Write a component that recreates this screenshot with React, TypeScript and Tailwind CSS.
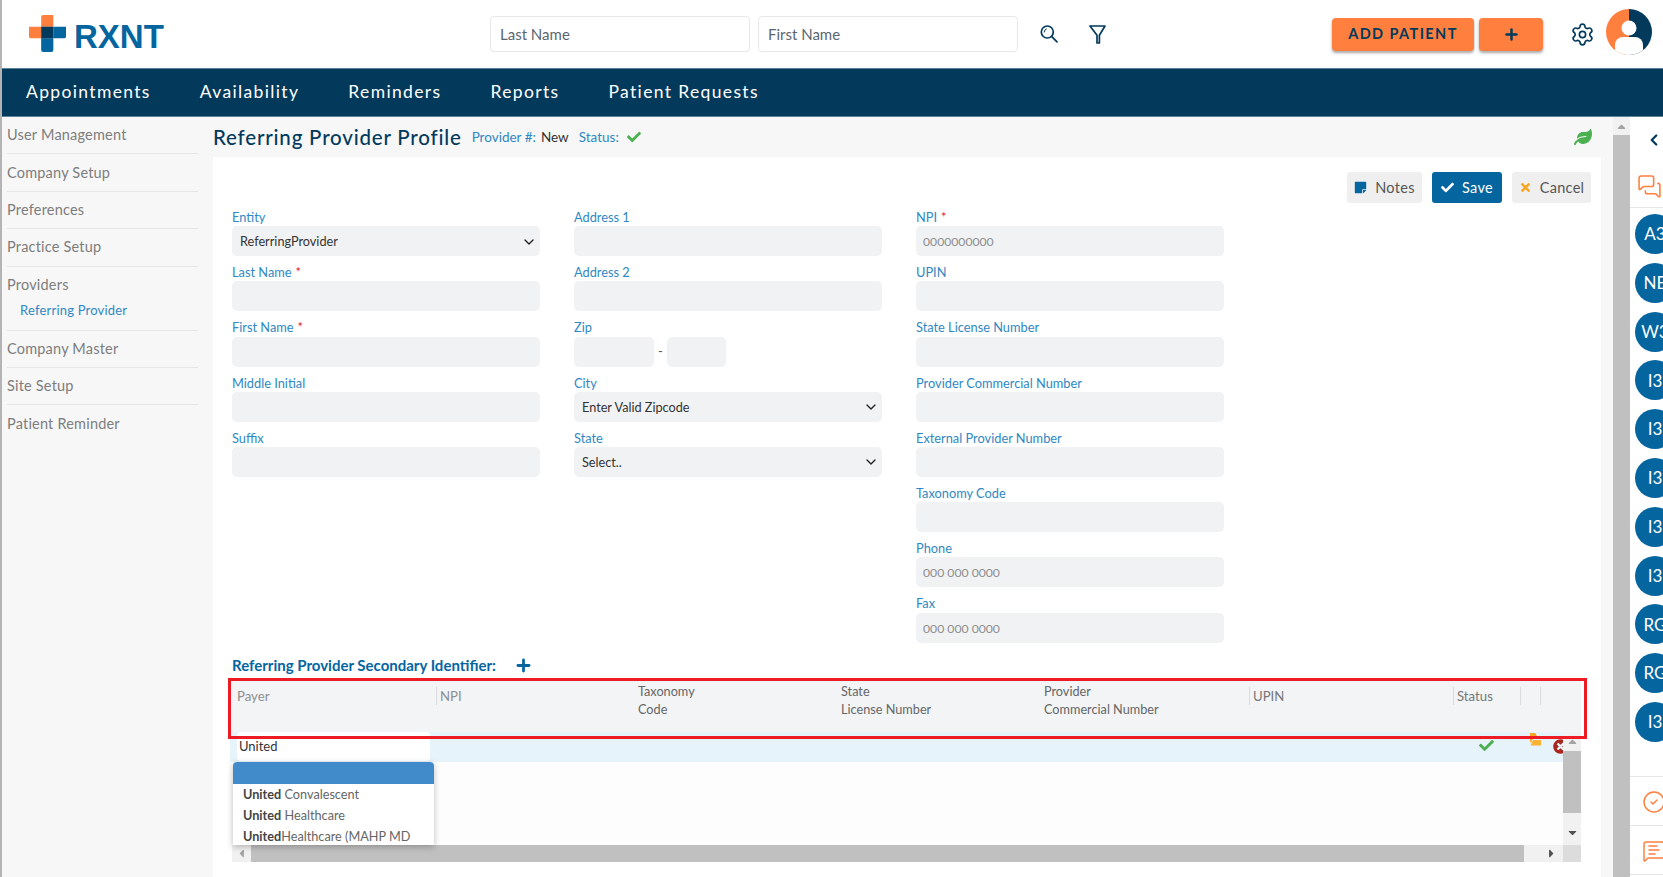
import { Settings, Plus, ChevronDown, ChevronLeft, MessagesSquare, MessageSquareText, CircleCheck } from "lucide-react";
import { FaCheck, FaTimes, FaLeaf, FaStickyNote, FaTimesCircle, FaCaretUp, FaCaretDown, FaCaretLeft, FaCaretRight } from "react-icons/fa";

const NAV = ["Appointments", "Availability", "Reminders", "Reports", "Patient Requests"];
const AVATARS = ["A3", "NE", "W3", "I3", "I3", "I3", "I3", "I3", "RG", "RG", "I3"];

function Field({ label, required, placeholder }: { label: string; required?: boolean; placeholder?: string }) {
  return (
    <div className="h-[55.2px]">
      <FieldLabel label={label} required={required} />
      <input
        readOnly
        placeholder={placeholder}
        className="h-[30px] w-full rounded-[5px] bg-[#f1f2f4] px-[7px] pt-[1px] text-[12.2px] text-[#555] placeholder:text-[#8e8e8e] outline-none"
      />
    </div>
  );
}

function FieldLabel({ label, required }: { label: string; required?: boolean }) {
  return (
    <div className="flex h-[25.2px] items-center pt-[8px] text-[12.8px] text-[#2f88c4]">
      {label}
      {required && <span className="ml-1 text-[#e02020]">*</span>}
    </div>
  );
}

function SelectField({ label, value }: { label: string; value: string }) {
  return (
    <div className="h-[55.2px]">
      <FieldLabel label={label} />
      <div className="flex h-[30px] items-center justify-between rounded-[5px] bg-[#f1f2f4] pl-[8px] pr-[3px] pt-[1px] text-[12.7px] text-[#333]">
        {value}
        <ChevronDown size={16} strokeWidth={2} className="text-[#222]" />
      </div>
    </div>
  );
}

function Logo() {
  return (
    <div className="flex items-end">
      <svg width="37" height="37" viewBox="0 0 38 38" className="mt-[-1px]">
        <path d="M12.5 2a2 2 0 0 1 2-2H25v12H12.5z" fill="#ff7f3f" />
        <path d="M0 12h12.5v12H2a2 2 0 0 1-2-2z" fill="#ff7f3f" />
        <path d="M25 12h13v10a2 2 0 0 1-2 2H25z" fill="#04659f" />
        <path d="M12.5 24H25v12a2 2 0 0 1-2 2h-8.5a2 2 0 0 1-2-2z" fill="#04659f" />
        <rect x="12.5" y="12" width="12.5" height="12" fill="#033a5c" />
      </svg>
      <span className="ml-[8px] text-[33px] font-bold leading-[31px] text-[#04659f] [font-family:'Liberation_Sans',sans-serif]">RXNT</span>
    </div>
  );
}

function Header() {
  return (
    <header className="flex h-[68px] items-center bg-white">
      <div className="ml-[27px] w-[461px]">
        <Logo />
      </div>
      <div className="flex gap-[8px]">
        {["Last Name", "First Name"].map((p) => (
          <input
            key={p}
            readOnly
            placeholder={p}
            className="h-[36px] w-[260px] rounded-[4px] border border-[#e8e8e8] px-[9px] text-[15px] placeholder:text-[#5c6670] outline-none"
          />
        ))}
      </div>
      <svg width="18" height="18" viewBox="0 0 18 18" fill="none" stroke="#033a5c" strokeWidth="1.7" className="ml-[22px]">
        <circle cx="7.3" cy="7" r="6" />
        <path d="M11.6 11.4 17 16.8" strokeLinecap="round" />
        <path d="M4.2 7a3 3 0 0 1 2.2-3" strokeWidth="1" strokeLinecap="round" />
      </svg>
      <svg width="17" height="19" viewBox="0 0 17 19" fill="none" stroke="#033a5c" strokeWidth="1.7" strokeLinejoin="round" className="ml-[31px]">
        <path d="M1 1h15L10.4 10.2V18H8V10.2z" />
      </svg>
      <button className="ml-[226px] h-[33px] w-[142px] rounded-[4px] bg-[#ff7f3f] text-[14.5px] font-bold tracking-[1.4px] text-[#033a5c] shadow-[0_2px_3px_rgba(0,0,0,0.35)]">
        ADD PATIENT
      </button>
      <button className="ml-[5px] flex h-[33px] w-[64px] items-center justify-center rounded-[4px] bg-[#ff7f3f] text-[#033a5c] shadow-[0_2px_3px_rgba(0,0,0,0.35)]">
        <Plus size={17} strokeWidth={3.5} />
      </button>
      <Settings size={25} strokeWidth={1.6} className="ml-[27px] text-[#033a5c]" />
      <svg width="46" height="46" viewBox="0 0 46 46" className="ml-[11px] mt-[-4px]">
        <defs>
          <clipPath id="avatar"><circle cx="23" cy="23" r="23" /></clipPath>
        </defs>
        <g clipPath="url(#avatar)">
          <rect width="23" height="46" fill="#ff7f3f" />
          <rect x="23" width="23" height="46" fill="#033a5c" />
          <circle cx="23" cy="19" r="7.5" fill="#fff" />
          <rect x="9" y="28" width="28" height="22" rx="8" fill="#fff" />
        </g>
      </svg>
    </header>
  );
}

function Sidebar() {
  const items = ["User Management", "Company Setup", "Preferences", "Practice Setup"];
  const rest = ["Company Master", "Site Setup", "Patient Reminder"];
  const row = "flex h-[37.4px] items-center text-[14.5px] tracking-[0.2px] text-[#7d7d7d]";
  return (
    <aside className="w-[196px] bg-[#f7f7f7] pl-[5px]">
      {items.map((i) => (
        <div key={i} className={`${row} border-b border-[#e6e6e6]`}>{i}</div>
      ))}
      <div className="flex h-[64px] flex-col border-b border-[#e6e6e6] pt-[7px] text-[14.5px] tracking-[0.2px] text-[#7d7d7d]">
        Providers
        <span className="ml-[13px] mt-[6px] text-[13px] text-[#2f88c4]">Referring Provider</span>
      </div>
      {rest.map((i, idx) => (
        <div key={i} className={`${row} ${idx < 2 ? "border-b border-[#e6e6e6]" : ""}`}>{i}</div>
      ))}
    </aside>
  );
}

function ActionButtons() {
  const base = "flex h-[31px] items-center justify-center gap-[8px] rounded-[3px] text-[14.5px] tracking-[0.3px]";
  return (
    <div className="flex h-[31px] justify-end gap-[10px] pr-[10px]">
      <button className={`${base} w-[75px] bg-[#efefef] text-[#555]`}>
        <FaStickyNote size={13} className="text-[#04659f]" /> Notes
      </button>
      <button className={`${base} w-[70px] bg-[#04659f] text-white`}>
        <FaCheck size={13} /> Save
      </button>
      <button className={`${base} w-[79px] bg-[#efefef] text-[#555]`}>
        <FaTimes size={13} className="text-[#f5a623]" /> Cancel
      </button>
    </div>
  );
}

function ProfileForm() {
  return (
    <div className="-mt-[2px] flex gap-[34px] pl-[19px]">
      <div className="w-[308px]">
        <SelectField label="Entity" value="ReferringProvider" />
        <Field label="Last Name" required />
        <Field label="First Name" required />
        <Field label="Middle Initial" />
        <Field label="Suffix" />
      </div>
      <div className="w-[308px]">
        <Field label="Address 1" />
        <Field label="Address 2" />
        <div className="h-[55.2px]">
          <FieldLabel label="Zip" />
          <div className="flex items-center">
            <div className="h-[30px] w-[80px] rounded-[5px] bg-[#f1f2f4]" />
            <span className="w-[13px] text-center text-[13px] text-[#555]">-</span>
            <div className="h-[30px] w-[59px] rounded-[5px] bg-[#f1f2f4]" />
          </div>
        </div>
        <SelectField label="City" value="Enter Valid Zipcode" />
        <SelectField label="State" value="Select.." />
      </div>
      <div className="w-[308px]">
        <Field label="NPI" required placeholder="0000000000" />
        <Field label="UPIN" />
        <Field label="State License Number" />
        <Field label="Provider Commercial Number" />
        <Field label="External Provider Number" />
        <Field label="Taxonomy Code" />
        <Field label="Phone" placeholder="000 000 0000" />
        <Field label="Fax" placeholder="000 000 0000" />
      </div>
    </div>
  );
}

const COLS: { w: string; label: string[]; color: string }[] = [
  { w: "w-[206px]", label: ["Payer"], color: "text-[#8f8f8f]" },
  { w: "w-[202px]", label: ["NPI"], color: "text-[#8f8f8f]" },
  { w: "w-[203px]", label: ["Taxonomy", "Code"], color: "text-[#666]" },
  { w: "w-[203px]", label: ["State", "License Number"], color: "text-[#666]" },
  { w: "w-[205px]", label: ["Provider", "Commercial Number"], color: "text-[#666]" },
  { w: "w-[204px]", label: ["UPIN"], color: "text-[#777]" },
  { w: "w-[67px]", label: ["Status"], color: "text-[#777]" },
  { w: "w-[20px]", label: [""], color: "" },
];

function IdentifierTable() {
  return (
    <div className="relative -ml-[2px] mt-[5px] w-[1351px]">
      <div className="flex h-[51px] bg-[#f2f4f6]">
        {COLS.map((c, i) =>
          c.label.length > 1 ? (
            <div key={i} className={`${c.w} pt-[1px] text-[12.7px] leading-[18px] ${c.color}`}>
              {c.label.map((l) => <div key={l}>{l}</div>)}
            </div>
          ) : (
            <div key={i} className={`${c.w} pt-[6px]`}>
              <div className={`h-[18px] text-[13.2px] leading-[18px] ${i === 0 ? "pl-[7px]" : "border-l border-[#d9dbde] pl-[3px]"} ${c.color}`}>
                {c.label[0]}
              </div>
            </div>
          )
        )}
        <div className="flex-1 pt-[6px]"><div className="h-[18px] border-l border-[#d9dbde]" /></div>
      </div>
      <div className="flex h-[113px]">
        <div className="w-[1333px] bg-[#fdfdfd]">
          <div className="relative flex h-[30px] items-center bg-[#e6f3fb]">
            <div className="ml-[7px] flex h-[29px] w-[193px] items-center rounded-[4px] bg-white pl-[2px] pt-[1px] text-[13px] text-[#333]">United</div>
            <FaCheck size={15} className="absolute left-[1249px] top-[6px] text-[#4caf50]" />
            <svg width="12" height="13" viewBox="0 0 12 13" className="absolute left-[1299px] top-[1px]">
              <path d="M1 0h5l2 3h3v3H4L1 10z" fill="#f5a623" />
              <path d="M4 7h8v5.5H1.5z" fill="#f9b233" />
            </svg>
            <FaTimesCircle size={15} className="absolute left-[1323px] top-[7px] text-[#a8261e]" />
          </div>
        </div>
        <div className="relative z-10 flex w-[18px] flex-col items-center bg-[#f1f1f1] pt-[1px]">
          <div className="flex h-[18px] items-center"><FaCaretUp size={13} className="text-[#a3a3a3]" /></div>
          <div className="h-[62px] w-full bg-[#c0c0c0]" />
          <div className="flex flex-1 items-end pb-[6px]"><FaCaretDown size={13} className="text-[#505050]" /></div>
        </div>
      </div>
      <div className="flex h-[17px] w-[1351px] pl-[2px]">
        <div className="flex w-[19px] items-center justify-center bg-[#f1f1f1]"><FaCaretLeft size={13} className="text-[#a3a3a3]" /></div>
        <div className="w-[1273px] bg-[#c0c0c0]" />
        <div className="flex w-[39px] items-center justify-end bg-[#f1f1f1] pr-[5px]"><FaCaretRight size={13} className="text-[#505050]" /></div>
        <div className="w-[18px] bg-[#dcdcdc]" />
      </div>
      {/* payer autocomplete, clipped by the scrolling body */}
      <div className="absolute left-[3px] top-[81px] h-[83px] w-[201px] overflow-hidden rounded-t-[4px] bg-white text-[12.7px] text-[#666] shadow-[0_2px_6px_rgba(0,0,0,0.25)]">
        <div className="h-[22px] bg-[#428bca]" />
        {[["United", " Convalescent"], ["United", " Healthcare"], ["United", "Healthcare (MAHP MD"]].map(([b, r]) => (
          <div key={r} className="flex h-[21px] items-center whitespace-pre pl-[10px] pt-[1px]">
            <b className="font-bold text-[#444]">{b}</b>{r}
          </div>
        ))}
      </div>
      {/* red annotation box */}
      <div className="pointer-events-none absolute -left-[2px] -top-[3px] z-20 h-[61px] w-[1359px] border-[3px] border-[#ed1c24]" />
    </div>
  );
}

function RightPanel() {
  return (
    <div className="w-[33px] overflow-hidden bg-white">
      <div className="h-[45px] pl-[15px] pt-[14px]">
        <ChevronLeft size={18} strokeWidth={3} className="text-[#033a5c]" />
      </div>
      <div className="h-[46px] border-b border-[#e6e6e6] pl-[7px] pt-[12px]">
        <MessagesSquare size={25} strokeWidth={1.5} className="text-[#ff7f3f]" />
      </div>
      <div className="flex flex-col gap-[8.8px] pl-[5px] pt-[6px]">
        {AVATARS.map((a, i) => (
          <div key={i} className="flex h-[40px] w-[40px] shrink-0 items-center justify-center rounded-full bg-[#04659f] text-[17px] text-white">{a}</div>
        ))}
      </div>
      <div className="mt-[34px] h-[50px] border-y border-[#e6e6e6] pl-[12px] pt-[13px]">
        <CircleCheck size={24} strokeWidth={1.5} className="text-[#ff7f3f]" />
      </div>
      <div className="h-[49px] border-b border-[#e6e6e6] pl-[12px] pt-[13px]">
        <MessageSquareText size={24} strokeWidth={1.5} className="text-[#ff7f3f]" />
      </div>
    </div>
  );
}

export default function App() {
  return (
    <div className="flex h-[877px] w-[1663px] flex-col overflow-hidden border-l-2 border-[#b4b4b4] bg-white [font-family:Lato,sans-serif]">
      <Header />
      <nav className="flex h-[49px] items-center gap-[49px] border-y border-[#5d8199] bg-[#033a5c] pl-[24px] text-[17.5px] tracking-[1.35px] text-white">
        {NAV.map((n) => <span key={n}>{n}</span>)}
      </nav>
      <div className="flex flex-1 overflow-hidden">
        <Sidebar />
        <main className="flex-1 bg-[#f7f7f7] pl-[15px] pr-[12px]">
          <div className="flex h-[40px] items-center">
            <h1 className="text-[20.5px] font-medium tracking-[0.8px] text-[#033a5c]">Referring Provider Profile</h1>
            <span className="ml-[10px] text-[13.5px] text-[#2f88c4]">Provider #:</span>
            <span className="ml-[5px] text-[13.5px] text-[#333]">New</span>
            <span className="ml-[10px] text-[13.5px] text-[#2f88c4]">Status:</span>
            <FaCheck size={14} className="ml-[8px] text-[#4caf50]" />
            <FaLeaf size={18} className="ml-auto mr-[9px] text-[#4caf50]" />
          </div>
          <div className="h-[720px] bg-white pt-[15px]">
            <ActionButtons />
            <ProfileForm />
            <div className="mt-[13px] flex h-[20px] items-center pl-[19px]">
              <span className="text-[15px] font-bold text-[#04659f]">Referring Provider Secondary Identifier:</span>
              <Plus size={19} strokeWidth={3.5} className="ml-[18px] text-[#04659f]" />
            </div>
            <div className="pl-[19px]"><IdentifierTable /></div>
          </div>
        </main>
        <div className="flex w-[17px] flex-col bg-[#f1f1f1]">
          <div className="flex h-[18px] items-center justify-center"><FaCaretUp size={13} className="text-[#a3a3a3]" /></div>
          <div className="flex-1 bg-[#c0c0c0]" />
        </div>
        <RightPanel />
      </div>
    </div>
  );
}
